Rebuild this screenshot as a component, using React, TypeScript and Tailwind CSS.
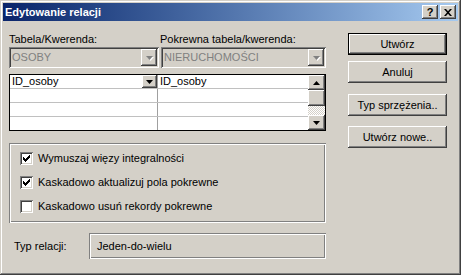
import React from 'react';

const raised =
  'shadow-[inset_-1px_-1px_#404040,inset_1px_1px_#ffffff,inset_-2px_-2px_#808080,inset_2px_2px_#d4d0c8]';
const sunken =
  'shadow-[inset_1px_1px_#808080,inset_-1px_-1px_#ffffff,inset_2px_2px_#404040,inset_-2px_-2px_#d4d0c8]';
const etched =
  'shadow-[inset_1px_1px_#808080,inset_-1px_-1px_#ffffff,inset_2px_2px_#ffffff,inset_-2px_-2px_#808080]';

const Arrow = ({ dir = 'down', disabled = false }: { dir?: 'up' | 'down'; disabled?: boolean }) => (
  <svg width="9" height="6" viewBox="0 0 9 6">
    {disabled && (
      <polygon points={dir === 'down' ? '2,2 9,2 5.5,6' : '2,5 9,5 5.5,1'} fill="#ffffff" />
    )}
    <polygon
      points={dir === 'down' ? '1,1 8,1 4.5,5' : '1,5 8,5 4.5,1'}
      fill={disabled ? '#808080' : '#000000'}
    />
  </svg>
);

const Combo = ({ value }: { value: string }) => (
  <div className={`h-[21px] flex items-center pl-[3px] pr-[2px] ${sunken}`}>
    <span className="flex-1 text-[#808080] truncate">{value}</span>
    <div className={`w-[16px] h-[17px] flex items-center justify-center bg-[#d4d0c8] ${raised}`}>
      <Arrow disabled />
    </div>
  </div>
);

const Check = ({ checked, label }: { checked: boolean; label: string }) => (
  <div className="h-[24px] flex items-center pl-[11px]">
    <div className={`w-[13px] h-[13px] bg-white flex items-center justify-center ${sunken}`}>
      {checked && (
        <svg width="7" height="7" viewBox="0 0 7 7">
          <path d="M0 2h1v1h1v1h1v-1h1v-1h1v-1h1v-1h1v3h-1v1h-1v1h-1v1h-1v1h-1v-1h-1v-1h-1z" fill="#000" />
        </svg>
      )}
    </div>
    <span className="ml-[5px] text-black">{label}</span>
  </div>
);

const Button = ({ label, isDefault = false }: { label: string; isDefault?: boolean }) => (
  <div
    className={`h-[22px] flex items-center justify-center bg-[#d4d0c8] ${
      isDefault ? 'border border-black' : ''
    }`}
  >
    <div className={`w-full h-full flex items-center justify-center ${raised}`}>{label}</div>
  </div>
);

const App = () => {
  const rows = [0, 1, 2, 3];

  return (
    <div
      className="w-[461px] h-[275px] bg-[#d4d0c8] p-[3px] flex flex-col text-[11px] leading-[13px] text-black font-['Liberation_Sans',Arial,sans-serif] shadow-[inset_-1px_-1px_#404040,inset_1px_1px_#d4d0c8,inset_-2px_-2px_#808080,inset_2px_2px_#ffffff]"
    >
      {/* Title bar */}
      <div className="h-[18px] flex items-center pl-[2px] pr-[2px] bg-gradient-to-r from-[#0a246a] to-[#a6caf0]">
        <span className="text-white font-bold">Edytowanie relacji</span>
        <div className="ml-auto flex gap-[2px]">
          <div className={`w-[16px] h-[14px] bg-[#d4d0c8] flex items-center justify-center ${raised}`}>
            <span className="font-bold text-[11px] leading-none">?</span>
          </div>
          <div className={`w-[16px] h-[14px] bg-[#d4d0c8] flex items-center justify-center ${raised}`}>
            <svg width="8" height="7" viewBox="0 0 8 7">
              <path d="M0 0h2l2 2.2L6 0h2L5 3.5 8 7H6L4 4.8 2 7H0l3-3.5z" fill="#000" />
            </svg>
          </div>
        </div>
      </div>

      {/* Body */}
      <div className="flex flex-1 pl-[6px]">
        <div className="w-[317px] flex flex-col">
          <div className="mt-[11px] h-[14px] flex items-center">
            <span className="w-[151px]">Tabela/Kwerenda:</span>
            <span>Pokrewna tabela/kwerenda:</span>
          </div>
          <div className="mt-[1px] flex">
            <div className="w-[150px]">
              <Combo value="OSOBY" />
            </div>
            <div className="ml-[2px] flex-1">
              <Combo value="NIERUCHOMOŚCI" />
            </div>
          </div>

          {/* Grid */}
          <div className="mt-[6px] h-[57px] border border-black bg-white flex">
            <div className="flex-1 flex flex-col">
              {rows.map((r) => (
                <div
                  key={r}
                  className={`flex ${r < 3 ? 'h-[14px] border-b border-[#c0c0c0]' : 'h-[13px]'}`}
                >
                  <div className="w-[148px] flex items-center pl-[2px] border-r border-[#a0a0a0]">
                    {r === 0 && (
                      <>
                        <span className="flex-1">ID_osoby</span>
                        <div className={`w-[15px] h-[13px] bg-[#d4d0c8] flex items-center justify-center ${raised}`}>
                          <Arrow />
                        </div>
                      </>
                    )}
                  </div>
                  <div className="flex-1 flex items-center pl-[2px]">{r === 0 && 'ID_osoby'}</div>
                </div>
              ))}
            </div>
            <div className="w-[17px] flex flex-col">
              <div className={`h-[15px] bg-[#d4d0c8] flex items-center justify-center ${raised}`}>
                <Arrow dir="up" />
              </div>
              <div className={`h-[16px] bg-[#d4d0c8] ${raised}`} />
              <div className="flex-1 bg-[conic-gradient(#ffffff_25%,#d4d0c8_0_50%,#ffffff_0_75%,#d4d0c8_0)] bg-[length:2px_2px]" />
              <div className={`h-[15px] bg-[#d4d0c8] flex items-center justify-center ${raised}`}>
                <Arrow />
              </div>
            </div>
          </div>

          {/* Options */}
          <div className={`mt-[12px] h-[80px] pt-[3px] flex flex-col ${etched}`}>
            <Check checked label="Wymuszaj więzy integralności" />
            <Check checked label="Kaskadowo aktualizuj pola pokrewne" />
            <Check checked={false} label="Kaskadowo usuń rekordy pokrewne" />
          </div>

          {/* Relation type */}
          <div className="mt-[10px] h-[26px] flex items-center">
            <span className="w-[80px] pl-[5px]">Typ relacji:</span>
            <div className={`flex-1 h-full flex items-center pl-[8px] ${etched}`}>Jeden-do-wielu</div>
          </div>
        </div>

        <div className="ml-[22px] w-[99px] flex flex-col">
          <div className="mt-[12px]">
            <Button label="Utwórz" isDefault />
          </div>
          <div className="mt-[6px]">
            <Button label="Anuluj" />
          </div>
          <div className="mt-[11px]">
            <Button label="Typ sprzężenia.." />
          </div>
          <div className="mt-[10px]">
            <Button label="Utwórz nowe.." />
          </div>
        </div>
      </div>
    </div>
  );
};

export default App;
